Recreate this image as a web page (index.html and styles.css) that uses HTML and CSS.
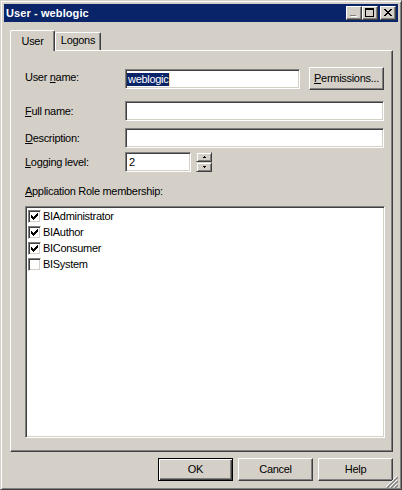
FILE: index.html
```html
<!DOCTYPE html>
<html>
<head>
<meta charset="utf-8">
<title>User - weblogic</title>
<link rel="stylesheet" href="styles.css">
</head>
<body>
<div class="window">
  <div class="titlebar">
    <span class="title">User - weblogic</span>
    <div class="caption-buttons">
      <span class="cbtn">
        <svg width="14" height="12" viewBox="0 0 14 12" shape-rendering="crispEdges"><path d="M4 9h6v1H4z" fill="#fff"/><path d="M3 8h6v1H3z" fill="#808080"/></svg>
      </span>
      <span class="cbtn">
        <svg width="14" height="12" viewBox="0 0 14 12" shape-rendering="crispEdges"><path d="M2 1h9v2H2zM2 3h1v7H2zM10 3h1v7h-1zM2 9h9v1H2z" fill="#000"/></svg>
      </span>
      <span class="cbtn close">
        <svg width="14" height="12" viewBox="0 0 14 12" shape-rendering="crispEdges"><path d="M3 2h2v1H3zM9 2h2v1H9zM4 3h2v1H4zM8 3h2v1H8zM5 4h4v1H5zM6 5h2v1H6zM5 6h4v1H5zM4 7h2v1H4zM8 7h2v1H8zM3 8h2v1H3zM9 8h2v1H9z" fill="#000"/></svg>
      </span>
    </div>
  </div>
  <div class="client">
    <div class="tabs">
      <div class="tab active">User</div>
      <div class="tab">Logons</div>
    </div>
    <div class="panel">
      <div class="row r1">
        <span class="lbl">User <u>n</u>ame:</span>
        <div class="field f-user"><span class="sel">weblogic</span><span class="caret"></span></div>
        <div class="btn perm"><u>P</u>ermissions...</div>
      </div>
      <div class="row r2">
        <span class="lbl"><u>F</u>ull name:</span>
        <div class="field f-wide"></div>
      </div>
      <div class="row r3">
        <span class="lbl"><u>D</u>escription:</span>
        <div class="field f-wide"></div>
      </div>
      <div class="row r4">
        <span class="lbl"><u>L</u>ogging level:</span>
        <div class="field f-level">2</div>
        <div class="spinner">
          <div class="spin-btn"><svg width="5" height="3" viewBox="0 0 5 3" shape-rendering="crispEdges"><path d="M2 0h1v1H2zM1 1h3v1H1z" fill="#000"/></svg></div>
          <div class="spin-btn"><svg width="5" height="3" viewBox="0 0 5 3" shape-rendering="crispEdges"><path d="M1 0h3v1H1zM2 1h1v1H2z" fill="#000"/></svg></div>
        </div>
      </div>
      <div class="list-label"><u>A</u>pplication Role membership:</div>
      <div class="listbox">
        <div class="item"><span class="chk on"></span><span>BIAdministrator</span></div>
        <div class="item"><span class="chk on"></span><span>BIAuthor</span></div>
        <div class="item"><span class="chk on"></span><span>BIConsumer</span></div>
        <div class="item"><span class="chk"></span><span>BISystem</span></div>
      </div>
    </div>
    <div class="footer">
      <div class="btn default">OK</div>
      <div class="btn">Cancel</div>
      <div class="btn">Help</div>
    </div>
  </div>
  <svg class="grip" width="12" height="12" viewBox="0 0 12 12">
    <path d="M11 0L0 11" stroke="#fff" stroke-width="1"/>
    <path d="M12 1L1 12" stroke="#808080" stroke-width="1.5"/>
    <path d="M11 4L4 11" stroke="#fff" stroke-width="1"/>
    <path d="M12 5L5 12" stroke="#808080" stroke-width="1.5"/>
    <path d="M11 8L8 11" stroke="#fff" stroke-width="1"/>
    <path d="M12 9L9 12" stroke="#808080" stroke-width="1.5"/>
  </svg>
</div>
</body>
</html>
```
FILE: styles.css
```css
html, body {
  margin: 0;
  padding: 0;
  background: #d4d0c8;
}
body {
  font-family: "Liberation Sans", Arial, sans-serif;
  font-size: 11px;
  letter-spacing: -0.3px;
  line-height: 13px;
  color: #000;
}
.window {
  position: relative;
  box-sizing: border-box;
  width: 402px;
  height: 490px;
  background: #d4d0c8;
  border: 1px solid;
  border-color: #d4d0c8 #404040 #404040 #d4d0c8;
  box-shadow: inset 1px 1px #fff, inset -1px -1px #808080;
  padding: 3px;
  display: flex;
  flex-direction: column;
}
.titlebar {
  height: 18px;
  background: #0a246a;
  display: flex;
  align-items: center;
  justify-content: space-between;
  padding: 0 2px 0 2px;
}
.title {
  color: #fff;
  font-weight: bold;
  letter-spacing: 0.1px;
}
.caption-buttons {
  display: flex;
  align-items: center;
}
.cbtn {
  box-sizing: border-box;
  width: 16px;
  height: 14px;
  background: #d4d0c8;
  border: 1px solid;
  border-color: #fff #404040 #404040 #fff;
  box-shadow: inset -1px -1px #808080;
  display: block;
}
.cbtn svg {
  display: block;
}
.cbtn.close {
  margin-left: 2px;
}
.client {
  flex: 1;
  display: flex;
  flex-direction: column;
  padding: 8px 5px 5px 6px;
}
.tabs {
  height: 20px;
  display: flex;
  align-items: flex-end;
}
.tab {
  box-sizing: border-box;
  height: 18px;
  width: 46px;
  border-top: 1px solid #fff;
  border-left: 1px solid #fff;
  border-right: 1px solid #404040;
  box-shadow: inset -1px 0 #808080;
  border-radius: 2px 2px 0 0;
  text-align: center;
  padding-top: 1px;
}
.tab.active {
  width: 45px;
  height: 21px;
  margin-bottom: -1px;
  padding-top: 4px;
  position: relative;
  z-index: 1;
  background: #d4d0c8;
}
.panel {
  flex: 1;
  display: flex;
  flex-direction: column;
  border: 1px solid;
  border-color: #fff #404040 #404040 #fff;
  box-shadow: inset -1px -1px #808080;
  padding: 16px 7px 13px 14px;
}
.row {
  display: flex;
  align-items: center;
}
.lbl {
  width: 100px;
  flex: none;
}
.r1 {
  align-items: flex-start;
  height: 23px;
}
.r1 .lbl {
  margin-top: 4px;
}
.r1 .field {
  margin-top: 2px;
}
.r2 { margin-top: 11px; }
.r3 { margin-top: 7px; }
.r4 { margin-top: 4px; }
.field {
  box-sizing: border-box;
  height: 20px;
  background: #fff;
  border: 1px solid;
  border-color: #808080 #fff #fff #808080;
  box-shadow: inset 1px 1px #404040, inset -1px -1px #d4d0c8;
  padding: 3px 2px 0 2px;
  display: flex;
  align-items: flex-start;
}
.f-user {
  width: 175px;
  padding-left: 1px;
}
.f-wide {
  width: 259px;
}
.f-level {
  width: 66px;
  padding-left: 3px;
}
.sel {
  background: #0a246a;
  color: #fff;
  padding: 0 1px;
}
.caret {
  width: 1px;
  height: 13px;
  background: #f5db95;
}
.btn {
  box-sizing: border-box;
  width: 75px;
  height: 23px;
  background: #d4d0c8;
  border: 1px solid;
  border-color: #fff #404040 #404040 #fff;
  box-shadow: inset -1px -1px #808080;
  display: flex;
  align-items: center;
  justify-content: center;
}
.perm {
  margin-left: 9px;
}
.btn.default {
  border-color: #000;
  box-shadow: inset 1px 1px #fff, inset -1px -1px #404040, inset -2px -2px #808080;
}
.spinner {
  margin-left: 5px;
  width: 16px;
  height: 20px;
  display: flex;
  flex-direction: column;
}
.spin-btn {
  box-sizing: border-box;
  height: 10px;
  background: #d4d0c8;
  border: 1px solid;
  border-color: #d4d0c8 #404040 #404040 #d4d0c8;
  box-shadow: inset 1px 1px #fff, inset -1px -1px #808080;
  display: flex;
  align-items: center;
  justify-content: center;
}
.spin-btn svg {
  display: block;
}
.list-label {
  margin-top: 13px;
}
.listbox {
  flex: 1;
  margin-top: 8px;
  background: #fff;
  border: 1px solid;
  border-color: #808080 #fff #fff #808080;
  box-shadow: inset 1px 1px #404040, inset -1px -1px #d4d0c8;
  padding: 1px 1px 1px 1px;
}
.item {
  height: 16px;
  display: flex;
  align-items: center;
  padding-left: 1px;
}
.chk {
  box-sizing: border-box;
  width: 13px;
  height: 13px;
  margin-right: 2px;
  background: #fff;
  border: 1px solid;
  border-color: #808080 #fff #fff #808080;
  box-shadow: inset 1px 1px #404040, inset -1px -1px #d4d0c8;
  flex: none;
}
.chk.on {
  background: #fff url("data:image/svg+xml,%3Csvg xmlns='http://www.w3.org/2000/svg' width='7' height='7' shape-rendering='crispEdges'%3E%3Cpath d='M0 2h1v3H0zM1 3h1v3H1zM2 4h1v3H2zM3 3h1v3H3zM4 2h1v3H4zM5 1h1v3H5zM6 0h1v3H6z' fill='%23000'/%3E%3C/svg%3E") no-repeat 2px 2px;
}
.footer {
  margin-top: 6px;
  height: 23px;
  display: flex;
  justify-content: flex-end;
  gap: 5px;
}
.grip {
  position: absolute;
  right: 3px;
  bottom: 1px;
}
```
